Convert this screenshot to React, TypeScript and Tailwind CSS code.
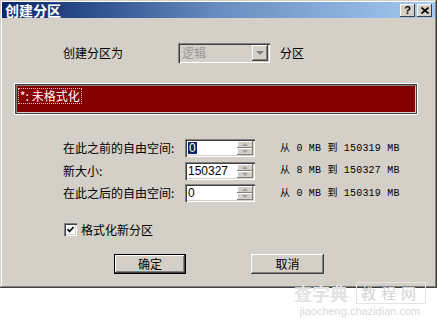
import React from "react"

const cjk = { fontFamily: '"Noto Sans CJK SC", "Liberation Sans", sans-serif' }
const mono = { fontFamily: '"Liberation Mono", "Noto Sans CJK SC", monospace' }

function Spin() {
  return (
    <div className="flex flex-col w-[16px] h-full">
      <div className="flex-1 bg-[#d4d0c8] shadow-[inset_-1px_-1px_0_#808080,inset_1px_1px_0_#fff] flex items-center justify-center">
        <div className="w-0 h-0 border-x-[3px] border-x-transparent border-b-[3px] border-b-[#a0a0a0]" />
      </div>
      <div className="flex-1 bg-[#d4d0c8] shadow-[inset_-1px_-1px_0_#808080,inset_1px_1px_0_#fff] flex items-center justify-center">
        <div className="w-0 h-0 border-x-[3px] border-x-transparent border-t-[3px] border-t-[#a0a0a0]" />
      </div>
    </div>
  )
}

function SizeRow({ label, value, range, selected }: { label: string; value: string; range: string; selected?: boolean }) {
  return (
    <div className="flex items-center h-[18px]">
      <div className="w-[122px] text-[12px] text-black" style={cjk}>{label}</div>
      <div className="w-[70px] h-[18px] bg-white flex shadow-[inset_1px_1px_0_#808080,inset_2px_2px_0_#404040,inset_-1px_-1px_0_#fff,inset_-2px_-2px_0_#d4d0c8] p-[2px]">
        <div className="flex-1 flex items-center pl-[1px] text-[12px] leading-none" style={{ fontFamily: '"Liberation Sans", sans-serif' }}>
          {selected ? <span className="bg-[#0a246a] text-white px-[1px]">{value}</span> : <span>{value}</span>}
        </div>
        <Spin />
      </div>
      <div className="ml-[25px] text-[10px] text-black tracking-[0.2px]" style={mono}>{range}</div>
    </div>
  )
}

export default function App() {
  return (
    <div className="w-[438px] h-[321px] bg-white relative overflow-hidden">
      <div className="w-[437px] h-[288px] bg-[#d4d0c8] p-[2px] flex flex-col shadow-[inset_-1px_-1px_0_#404040,inset_1px_1px_0_#d4d0c8,inset_-2px_-2px_0_#808080,inset_2px_2px_0_#fff]">
        {/* title bar */}
        <div className="h-[16px] flex items-center justify-between bg-gradient-to-r from-[#0a246a] via-[#6a8cc0] to-[#a6caf0] pl-[3px] pr-[3px]">
          <span className="text-white font-bold text-[14px] leading-none" style={cjk}>创建分区</span>
          <div className="flex gap-[2px]">
            <div className="w-[15px] h-[13px] bg-[#d4d0c8] shadow-[inset_-1px_-1px_0_#404040,inset_1px_1px_0_#fff] flex items-center justify-center text-[11px] font-bold leading-none" style={{ fontFamily: '"Liberation Sans", sans-serif' }}>?</div>
            <div className="w-[15px] h-[13px] bg-[#d4d0c8] shadow-[inset_-1px_-1px_0_#404040,inset_1px_1px_0_#fff] flex items-center justify-center">
              <svg width="8" height="7" viewBox="0 0 8 7"><path d="M0.5 0.5 L7.5 6.5 M7.5 0.5 L0.5 6.5" stroke="#000" strokeWidth="1.6" /></svg>
            </div>
          </div>
        </div>

        {/* partition type */}
        <div className="flex items-center mt-[25px] h-[20px]">
          <div className="ml-[61px] w-[115px] text-[12px]" style={cjk}>创建分区为</div>
          <div className="w-[92px] h-[20px] bg-[#d4d0c8] flex shadow-[inset_1px_1px_0_#808080,inset_2px_2px_0_#404040,inset_-1px_-1px_0_#fff,inset_-2px_-2px_0_#d4d0c8] p-[2px]">
            <div className="flex-1 flex items-center pl-[2px] text-[12px] text-[#9a9a9a]" style={cjk}>逻辑</div>
            <div className="w-[16px] bg-[#d4d0c8] shadow-[inset_-1px_-1px_0_#404040,inset_1px_1px_0_#fff,inset_-2px_-2px_0_#808080] flex items-center justify-center">
              <div className="w-0 h-0 border-x-[4px] border-x-transparent border-t-[4px] border-t-[#808080]" />
            </div>
          </div>
          <div className="ml-[10px] text-[12px]" style={cjk}>分区</div>
        </div>

        {/* partition list */}
        <div className="ml-[12px] mt-[20px] w-[404px] h-[32px] p-[3px] shadow-[inset_1px_1px_0_#fff,inset_-1px_-1px_0_#fff,inset_2px_2px_0_#404040,inset_-2px_-2px_0_#404040,inset_3px_3px_0_#808080]">
          <div className="w-full h-full bg-[#850000] flex items-start pt-[2px] pl-[1px]">
            <span className="text-white text-[12px] leading-[14px] px-[1px] border border-dotted border-[#e0c0c0]" style={cjk}>*: 未格式化</span>
          </div>
        </div>

        {/* sizes */}
        <div className="ml-[61px] mt-[24px] flex flex-col gap-[4.5px]">
          <SizeRow label="在此之前的自由空间:" value="0" range="从 0 MB 到 150319 MB" selected />
          <SizeRow label="新大小:" value="150327" range="从 8 MB 到 150327 MB" />
          <SizeRow label="在此之后的自由空间:" value="0" range="从 0 MB 到 150319 MB" />
        </div>

        {/* checkbox */}
        <div className="ml-[62px] mt-[21px] flex items-center h-[13px]">
          <div className="w-[13px] h-[13px] bg-white shadow-[inset_1px_1px_0_#808080,inset_2px_2px_0_#404040,inset_-1px_-1px_0_#fff,inset_-2px_-2px_0_#d4d0c8] flex items-center justify-center">
            <svg width="7" height="7" viewBox="0 0 7 7"><path d="M0.5 3 L2.5 5.5 L6.5 1" stroke="#000" strokeWidth="1.6" fill="none" /></svg>
          </div>
          <span className="ml-[4px] text-[12px]" style={cjk}>格式化新分区</span>
        </div>

        {/* buttons */}
        <div className="flex mt-[18px]">
          <div className="ml-[112px] w-[72px] h-[20px] border border-black bg-[#d4d0c8] shadow-[inset_-1px_-1px_0_#404040,inset_1px_1px_0_#fff,inset_-2px_-2px_0_#808080] flex items-center justify-center text-[12px]" style={cjk}>确定</div>
          <div className="ml-[65px] w-[73px] h-[20px] bg-[#d4d0c8] shadow-[inset_-1px_-1px_0_#404040,inset_1px_1px_0_#fff,inset_-2px_-2px_0_#808080] flex items-center justify-center text-[12px]" style={cjk}>取消</div>
        </div>
      </div>

      {/* watermark */}
      <div className="absolute left-[294px] top-[282px] flex flex-col items-center whitespace-nowrap">
        <div className="flex items-center gap-[8px]">
          <span className="text-[18px] font-bold text-[#e2e2e2] leading-none" style={cjk}>查字典</span>
          <span className="text-[15px] text-[#d4d4d4] border border-[#e4e4e4] px-[4px] leading-[20px] tracking-[5px]" style={cjk}>教程网</span>
        </div>
        <span className="text-[11px] text-[#d8d8d8] leading-none mt-[2px]" style={{ fontFamily: '"Liberation Sans", sans-serif' }}>jiaocheng.chazidian.com</span>
      </div>
    </div>
  )
}
